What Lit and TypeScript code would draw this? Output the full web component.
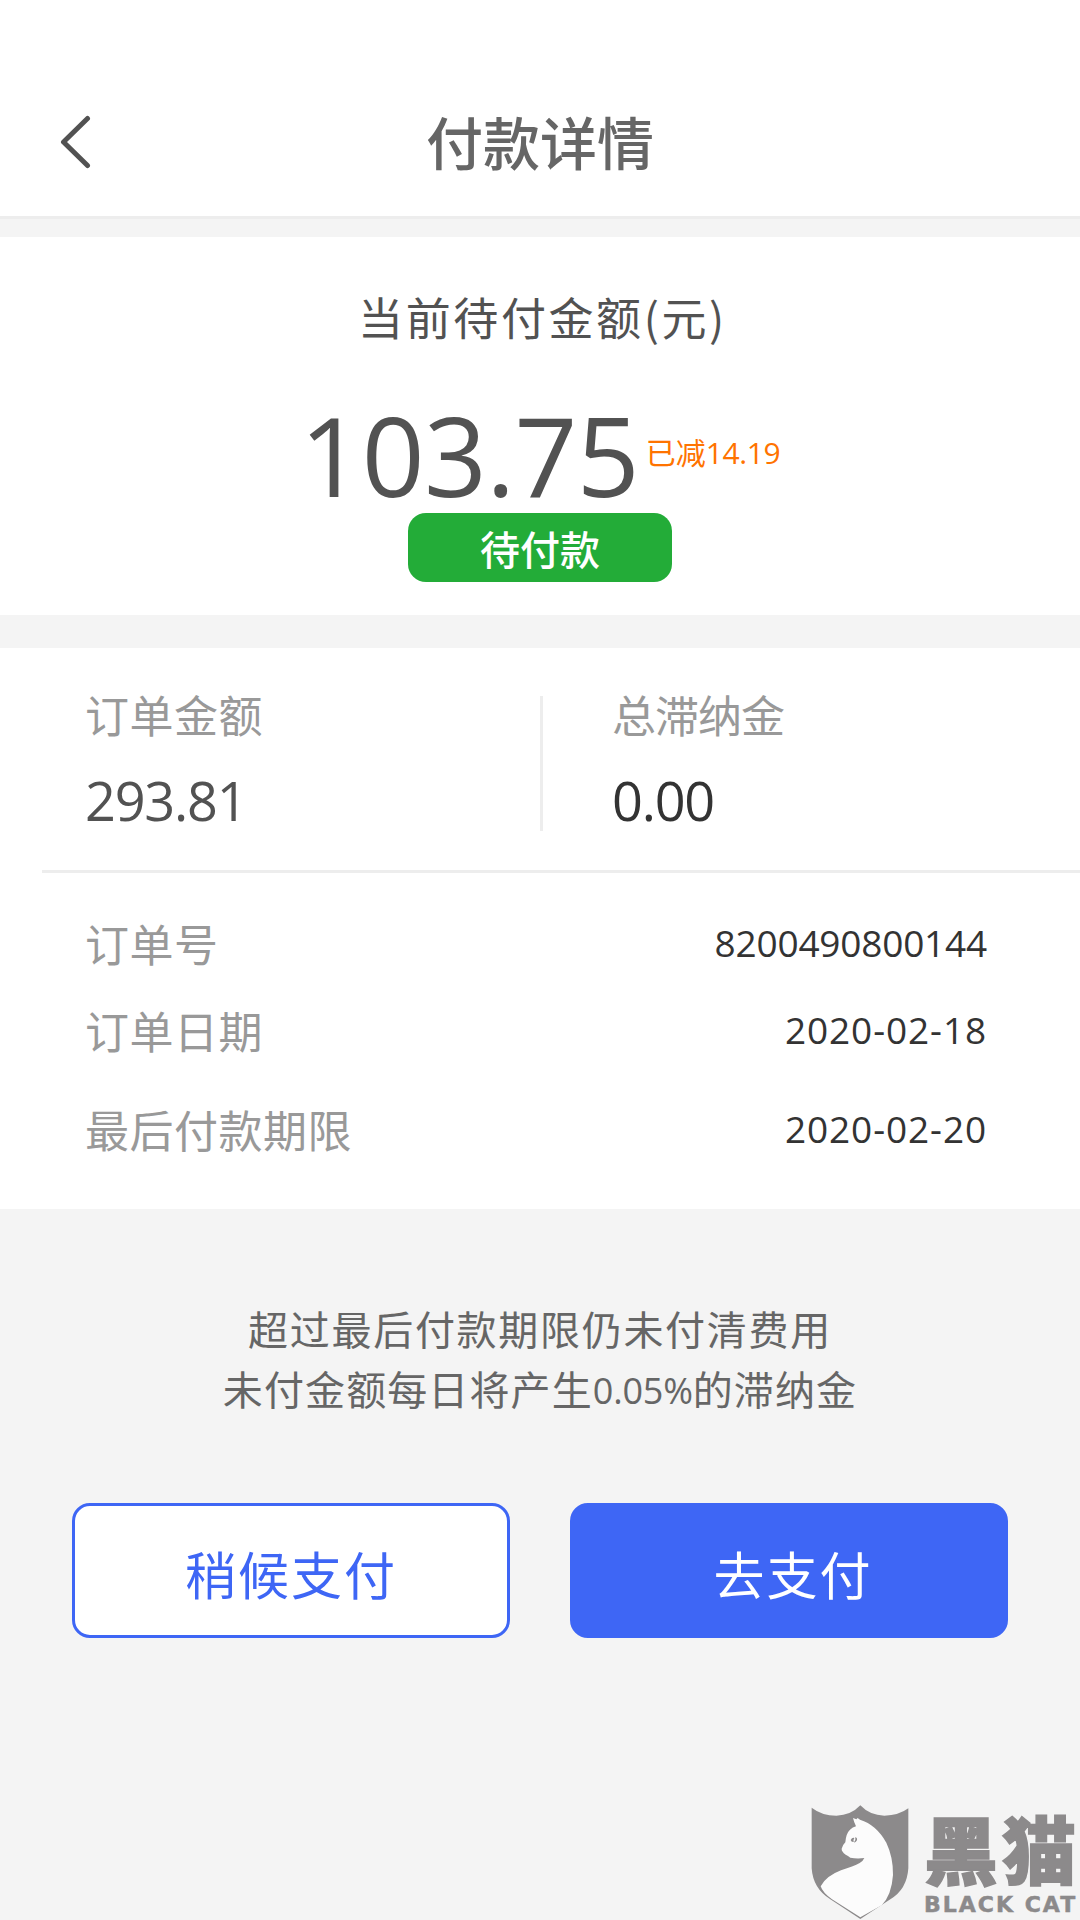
import {LitElement, css, html} from 'lit'
import {customElement} from 'lit/decorators.js'

const orderRows = [
  {label: '订单号', value: '8200490800144', kind: 'number'},
  {label: '订单日期', value: '2020-02-18', kind: 'date'},
  {label: '最后付款期限', value: '2020-02-20', kind: 'date'},
]

@customElement('black-cat-mark')
export class BlackCatMark extends LitElement {
  static styles = css`
    :host {
      display: flex;
      align-items: flex-end;
      gap: 15px;
      color: #8c8a8b;
    }

    .shield {
      display: block;
      width: 98px;
      height: 115px;
    }

    .words {
      display: flex;
      flex-direction: column;
      width: 156px;
      padding-bottom: 4px;
    }

    .name {
      font: 900 74px/72px "Noto Sans CJK SC", sans-serif;
      letter-spacing: 4px;
      -webkit-text-stroke: 1.5px currentColor;
      white-space: nowrap;
    }

    .latin {
      margin-top: 11px;
      font: bold 22px/22px "DejaVu Sans", sans-serif;
      letter-spacing: 2px;
      -webkit-text-stroke: 0.5px currentColor;
      white-space: nowrap;
    }
  `

  render() {
    return html`
      <svg class="shield" viewBox="62 75 294 345">
        <path fill="#8c8a8b" d="M64 83Q95 107 138 107Q182 106 210 76Q238 106 282 107Q326 106 354 85V265Q350 328 300 358L210 417L120 358Q68 326 64 265Z"/>
        <path fill="#fcfcfc" d="M188 114L198 118L202 114L209 119Q258 134 288 188Q309 232 308 285Q304 345 274 376L210 412L125 358Q97 338 91 319Q107 288 152 271Q190 259 208 249Q219 242 222 234Q200 237 180 233Q173 227 166 224Q153 214 154 206Q156 196 165 187Q167 160 179 149Q187 142 197 139Q191 127 188 114Z"/>
        <path fill="#8c8a8b" d="M181 180Q186 171 192 174Q188 180 190 186Q183 187 181 180ZM195 171Q203 175 199 182Q195 188 191 187Q197 180 195 171Z"/>
      </svg>
      <div class="words">
        <span class="name">黑猫</span>
        <span class="latin">BLACK CAT</span>
      </div>
    `
  }
}

@customElement('app-root')
export class AppRoot extends LitElement {
  static styles = css`
    :host {
      display: flex;
      flex-direction: column;
      box-sizing: border-box;
      width: 1080px;
      height: 1920px;
      overflow: hidden;
      background: #f4f4f4;
      color: #525252;
      font-family: "Noto Sans CJK SC", sans-serif;
    }

    .header {
      display: grid;
      grid-template-columns: 1fr auto 1fr;
      align-items: center;
      box-sizing: border-box;
      height: 219px;
      padding: 63px 60px 0;
      background: white;
      border-bottom: 3px solid #ededed;
    }

    .back {
      width: 32px;
      height: 54px;
      margin-top: 5px;
    }

    h1 {
      margin: 0;
      font-size: 57px;
      font-weight: 500;
      line-height: 60px;
      color: #666;
    }

    .due {
      display: flex;
      flex-direction: column;
      align-items: center;
      box-sizing: border-box;
      height: 378px;
      margin-top: 18px;
      padding-top: 50px;
      background: white;
    }

    .due-title {
      padding-left: 5px;
      font-size: 45px;
      line-height: 60px;
      letter-spacing: 2.6px;
    }

    .due-amount {
      display: flex;
      align-items: center;
      height: 110px;
      gap: 7px;
      margin-top: 48px;
      white-space: nowrap;
    }

    .amount {
      padding-top: 7px;
      font-family: "Open Sans", sans-serif;
      font-size: 110px;
      line-height: 110px;
      letter-spacing: -0.7px;
    }

    .discount {
      padding-top: 3px;
      font-size: 30px;
      line-height: 40px;
      color: #ff7300;
    }

    .discount .digits {
      font-family: "Open Sans", sans-serif;
      letter-spacing: -0.4px;
    }

    .badge {
      box-sizing: border-box;
      width: 264px;
      height: 69px;
      margin-top: 8px;
      border-radius: 18px;
      background: #23ac38;
      color: white;
      font-size: 40px;
      font-weight: 500;
      line-height: 71px;
      text-align: center;
    }

    .order {
      margin-top: 33px;
      background: white;
    }

    .summary {
      display: flex;
      height: 222px;
    }

    .cell {
      box-sizing: border-box;
      width: 540px;
      padding: 44px 0 0 85px;
    }

    .cell + .split + .cell {
      width: 537px;
      padding-left: 69px;
    }

    .split {
      width: 3px;
      margin: 48px 0 39px;
      background: #ededed;
    }

    .label {
      font-size: 44px;
      line-height: 44px;
      letter-spacing: 0.5px;
      color: #999;
    }

    .label.tight {
      letter-spacing: -1px;
    }

    .sum {
      margin-top: 34px;
      font-family: "Open Sans", sans-serif;
      font-size: 54px;
      line-height: 60px;
      letter-spacing: -1.2px;
    }

    .sum.dark {
      color: #333;
    }

    .rows {
      display: flex;
      flex-direction: column;
      box-sizing: border-box;
      height: 339px;
      margin-left: 42px;
      padding: 48px 93px 0 43px;
      border-top: 3px solid #ededed;
    }

    .row {
      display: flex;
      justify-content: space-between;
      align-items: center;
      height: 44px;
      margin-bottom: 43px;
    }

    .row:last-child {
      margin-top: 12px;
    }

    .value {
      font-family: "Open Sans", sans-serif;
      font-size: 37px;
      line-height: 44px;
      color: #333;
    }

    .value.number {
      letter-spacing: -0.2px;
    }

    .value.date {
      letter-spacing: 0.9px;
    }

    .notice {
      height: 120px;
      margin: 89px 0 0;
      font-size: 40px;
      line-height: 60px;
      letter-spacing: 1.1px;
      text-align: center;
      color: #666;
    }

    .first {
      letter-spacing: 1.7px;
    }

    .rate {
      font-family: "Open Sans", sans-serif;
      font-size: 36px;
      line-height: 1;
      letter-spacing: -0.2px;
      vertical-align: 1px;
    }

    .actions {
      display: flex;
      gap: 60px;
      margin-top: 85px;
      padding: 0 72px;
    }

    button {
      box-sizing: border-box;
      width: 438px;
      height: 135px;
      padding: 4px 0 0;
      border: 3px solid #3e66f5;
      border-radius: 18px;
      font-family: inherit;
      font-size: 51px;
      letter-spacing: 2px;
      background: white;
      color: #3e66f5;
    }

    .primary {
      padding-left: 8px;
      background: #3e66f5;
      color: white;
    }

    black-cat-mark {
      align-self: flex-end;
      margin-top: auto;
    }
  `

  render() {
    return html`
      <header class="header">
        <svg class="back" viewBox="0 0 32 54" fill="none" stroke="#525252" stroke-width="5" stroke-linecap="round" stroke-linejoin="round">
          <path d="M27.500 3.500L3.500 27L27.500 50.500"/>
        </svg>
        <h1>付款详情</h1>
      </header>

      <section class="due">
        <div class="due-title">当前待付金额(元)</div>
        <div class="due-amount">
          <span class="amount">103.75</span>
          <span class="discount">已减<span class="digits">14.19</span></span>
        </div>
        <div class="badge">待付款</div>
      </section>

      <section class="order">
        <div class="summary">
          <div class="cell">
            <div class="label">订单金额</div>
            <div class="sum">293.81</div>
          </div>
          <div class="split"></div>
          <div class="cell">
            <div class="label tight">总滞纳金</div>
            <div class="sum dark">0.00</div>
          </div>
        </div>
        <div class="rows">
          ${orderRows.map(row => html`
            <div class="row">
              <span class="label">${row.label}</span>
              <span class="value ${row.kind}">${row.value}</span>
            </div>
          `)}
        </div>
      </section>

      <p class="notice">
        <span class="first">超过最后付款期限仍未付清费用</span><br>
        未付金额每日将产生<span class="rate">0.05%</span>的滞纳金
      </p>

      <div class="actions">
        <button>稍候支付</button>
        <button class="primary">去支付</button>
      </div>

      <black-cat-mark></black-cat-mark>
    `
  }
}
